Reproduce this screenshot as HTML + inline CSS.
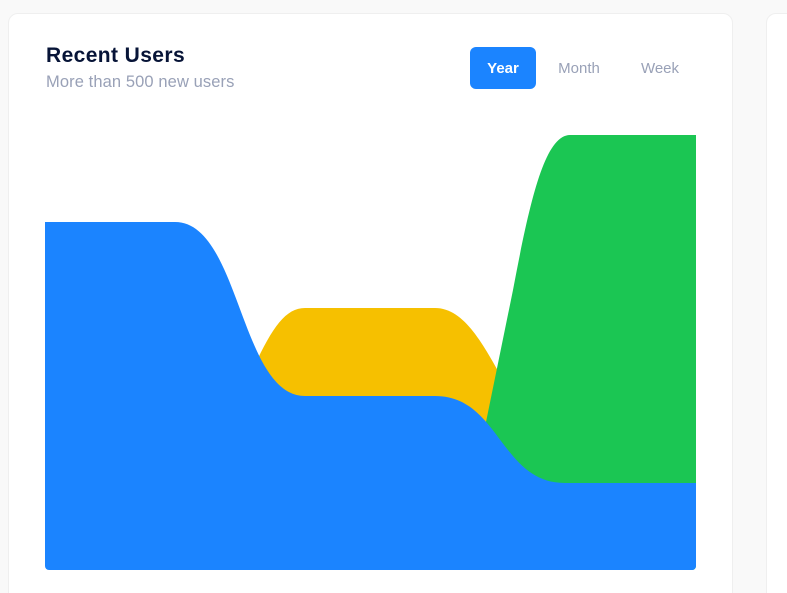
<!DOCTYPE html>
<html><head><style>
html,body{margin:0;width:787px;height:593px;overflow:hidden}
body{background:#f9f9f9;font-family:"Liberation Sans",sans-serif;position:relative}
.card{position:absolute;left:8px;top:13px;width:725px;height:600px;background:#fff;border:1px solid #efefef;border-radius:10px;box-sizing:border-box}
.card2{position:absolute;left:766px;top:13px;width:100px;height:600px;background:#fff;border:1px solid #efefef;border-radius:10px}
h1{position:absolute;left:37px;top:30px;margin:0;font-size:21px;font-weight:600;color:#071437;letter-spacing:0.4px}
.sub{position:absolute;left:37px;top:59px;font-size:16.5px;color:#99a1b7;letter-spacing:0.1px}
.tab{position:absolute;top:33px;height:42px;line-height:43px;font-size:15px;color:#99a1b7;text-align:center;border-radius:6px}
</style></head><body>
<div class="card">
<h1>Recent Users</h1>
<div class="sub">More than 500 new users</div>
<div class="tab" style="left:461px;width:66px;background:#1b84ff;color:#fff;font-weight:600">Year</div>
<div class="tab" style="left:536px;width:68px">Month</div>
<div class="tab" style="left:618px;width:66px">Week</div>
</div>
<div class="card2"></div>
<svg style="position:absolute;left:0;top:0" width="787" height="593">
<defs><clipPath id="c"><rect x="45" y="100" width="651" height="470" rx="4"/></clipPath></defs>
<g clip-path="url(#c)">
<path fill="#f6c000" d="M235,410 C265,340 280,308 305,308 L435,308 C470,308 490,360 515,400 L515,570 L235,570 Z"/>
<path fill="#1bc653" d="M468,510 L513,290 C530,200 545,135 570,135 L696,135 L696,570 L468,570 Z"/>
<path fill="#1b84ff" d="M45,222 L175,222 C240,222 240,396 305,396 L435,396 C500,396 500,483 565,483 L696,483 L696,570 L45,570 Z"/>
</g>
</svg>
</body></html>
